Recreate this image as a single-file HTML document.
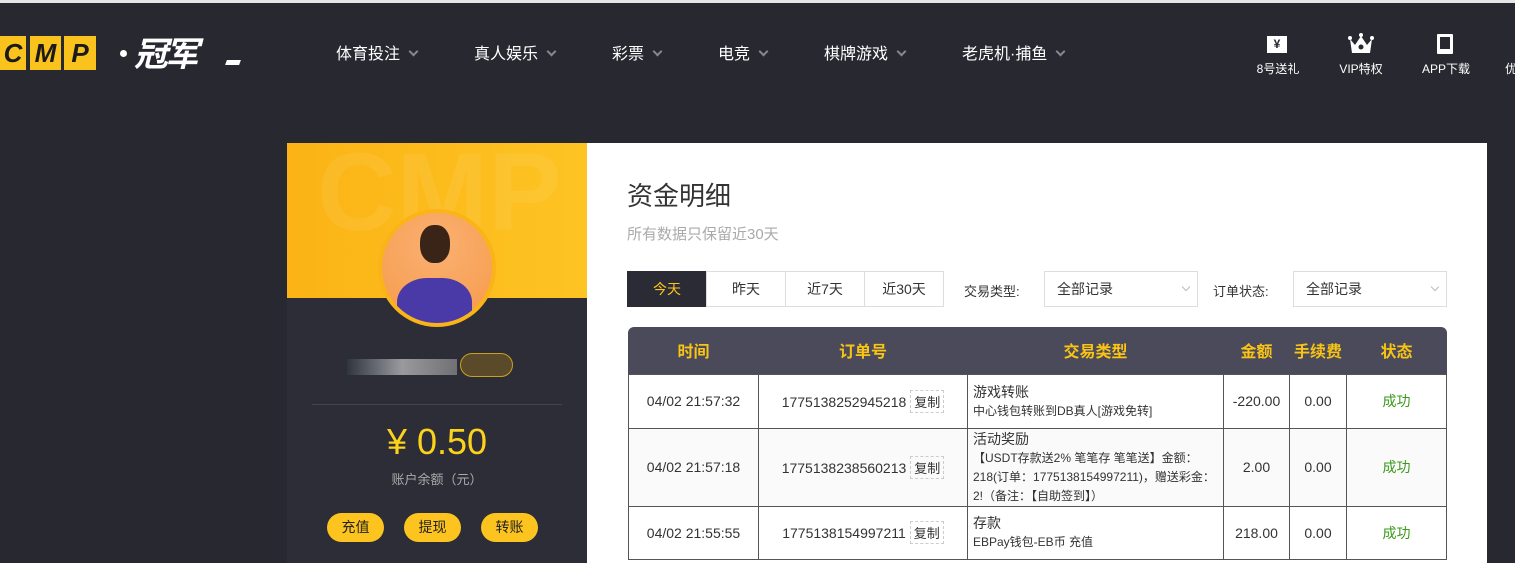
<!DOCTYPE html>
<html><head><meta charset="utf-8"><style>
*{margin:0;padding:0;box-sizing:border-box}
body{width:1515px;height:563px;overflow:hidden;background:#282830;font-family:"Liberation Sans","Noto Sans CJK SC",sans-serif;position:relative}
.topline{position:absolute;left:0;top:0;width:1515px;height:3px;background:#e6e6e6}
.abs{position:absolute}
.logo .b{position:absolute;top:36px;height:34px;background:#f9c21c;color:#1a1a1a;font:italic bold 26px "Liberation Sans",sans-serif;text-align:center;line-height:34px}
.nav{position:absolute;top:40px;color:#fff;font-size:16px;white-space:nowrap}
.nav i{display:inline-block;width:7px;height:7px;border-right:2px solid #888;border-bottom:2px solid #888;transform:rotate(45deg);margin-left:10px;position:relative;top:-4px}
.ic{position:absolute;top:60px;color:#fff;font-size:12px;text-align:center;width:70px}
.card{position:absolute;left:287px;top:143px;width:300px;height:420px;background:#2d2d37}
.cardtop{position:absolute;left:0;top:0;width:300px;height:155px;background:linear-gradient(90deg,#fbb315,#fdc423);overflow:hidden}
.panel{position:absolute;left:587px;top:143px;width:900px;height:420px;background:#fff}
.btn{position:absolute;top:513px;width:57px;height:29px;border-radius:15px;background:#fdc41f;color:#222;font-size:14px;text-align:center;line-height:29px}
table{position:absolute;left:628px;top:327px;width:819px;border-collapse:collapse;font-size:14px;color:#333}
th{color:#f9c414;height:47px;font-size:16px;font-weight:bold}
td{border:1px solid #555;text-align:center}
.l{text-align:left;padding-left:5px;font-size:14px;line-height:20px}
.l small{font-size:12px;display:block;line-height:19px}
.cp{display:inline-block;border:1px dashed #ccc;padding:1px 3px;margin-left:4px;font-size:13px}
.ok{color:#3a9a1a}
.tab{position:absolute;top:271px;height:36px;border:1px solid #ddd;text-align:center;line-height:34px;font-size:14px;color:#333}
.sel{position:absolute;top:271px;height:36px;width:154px;border:1px solid #ddd;font-size:14px;line-height:34px;padding-left:12px;color:#333}
.sel:after{content:"";position:absolute;right:8px;top:12px;width:5px;height:5px;border-right:1px solid #bbb;border-bottom:1px solid #bbb;transform:rotate(45deg)}
</style></head><body>
<div class="topline"></div>
<div class="logo"><div class="b" style="left:0;width:26px">C</div><div class="b" style="left:30px;width:31px">M</div><div class="b" style="left:64px;width:32px">P</div></div>
<div class="abs" style="left:120px;top:50px;width:7px;height:7px;border-radius:50%;background:#fff"></div>
<div class="abs" style="left:134px;top:30px;color:#fff;font:italic bold 34px 'Noto Sans CJK SC',sans-serif;letter-spacing:-3px;line-height:44px">冠军</div>
<div class="abs" style="left:226px;top:60px;width:14px;height:5px;background:#fff;transform:skewX(-20deg)"></div>
<div class="nav" style="left:336px">体育投注<i></i></div>
<div class="nav" style="left:474px">真人娱乐<i></i></div>
<div class="nav" style="left:612px">彩票<i></i></div>
<div class="nav" style="left:718px">电竞<i></i></div>
<div class="nav" style="left:824px">棋牌游戏<i></i></div>
<div class="nav" style="left:962px">老虎机·捕鱼<i></i></div>
<div class="abs" style="left:1267px;top:36px;width:20px;height:17px;background:#fff;color:#282830;font-size:12px;font-weight:bold;text-align:center;line-height:17px">¥</div>
<div class="ic" style="left:1243px">8号送礼</div>
<svg class="abs" style="left:1348px;top:32px" width="26" height="22"><path d="M2 7L7 13L13 4L19 13L24 7L22 21H4Z" fill="#fff"/><circle cx="2" cy="6" r="2" fill="#fff"/><circle cx="13" cy="3" r="2" fill="#fff"/><circle cx="24" cy="6" r="2" fill="#fff"/><circle cx="13" cy="15" r="2.5" fill="#282830"/></svg>
<div class="ic" style="left:1326px">VIP特权</div>
<div class="abs" style="left:1437px;top:34px;width:16px;height:20px;border:3px solid #fff;border-bottom-width:5px;border-radius:1px"></div>
<div class="ic" style="left:1411px">APP下载</div>
<div class="ic" style="left:1505px;width:20px;text-align:left">优</div>

<div class="card">
 <div class="cardtop"><div style="position:absolute;left:30px;top:0;font:bold 110px 'Liberation Sans',sans-serif;color:rgba(255,255,255,.07);line-height:100px">CMP</div></div>
 <div style="position:absolute;left:91px;top:66px;width:118px;height:118px;border-radius:50%;background:#fbb417"></div>
 <div style="position:absolute;left:95px;top:70px;width:110px;height:110px;border-radius:50%;background:radial-gradient(circle at 50% 30%,#fbb071,#f59a4a);overflow:hidden">
  <div style="position:absolute;left:38px;top:12px;width:30px;height:38px;border-radius:45%;background:#3a2418"></div>
  <div style="position:absolute;left:15px;top:65px;width:75px;height:60px;border-radius:40% 40% 0 0;background:#4a3aa8"></div>
 </div>
 <div style="position:absolute;left:60px;top:216px;width:110px;height:16px;background:linear-gradient(90deg,#2f3540,#9a999e,#707075)"></div>
 <div style="position:absolute;left:173px;top:210px;width:53px;height:24px;border:1px solid #c9a020;border-radius:12px;background:#5a4a2a"></div>
 <div style="position:absolute;left:25px;top:261px;width:250px;height:1px;background:#444450"></div>
 <div style="position:absolute;left:0;top:278px;width:300px;text-align:center;color:#fdd21a;font-size:36px">¥ 0.50</div>
 <div style="position:absolute;left:0;top:326px;width:300px;text-align:center;color:#aaa;font-size:13px">账户余额（元）</div>
</div>
<div class="btn" style="left:327px">充值</div>
<div class="btn" style="left:404px">提现</div>
<div class="btn" style="left:481px">转账</div>

<div class="panel"></div>
<div class="abs" style="left:627px;top:176px;font-size:26px;color:#333">资金明细</div>
<div class="abs" style="left:627px;top:223px;font-size:15px;color:#aaa">所有数据只保留近30天</div>
<div class="tab" style="left:627px;width:80px;background:#2b2b35;border-color:#2b2b35;color:#fdc41f">今天</div>
<div class="tab" style="left:706px;width:80px">昨天</div>
<div class="tab" style="left:785px;width:80px">近7天</div>
<div class="tab" style="left:864px;width:80px">近30天</div>
<div class="abs" style="left:964px;top:281px;font-size:13px;color:#333">交易类型:</div>
<div class="sel" style="left:1044px">全部记录</div>
<div class="abs" style="left:1213px;top:281px;font-size:13px;color:#333">订单状态:</div>
<div class="sel" style="left:1293px">全部记录</div>
<div class="abs" style="left:628px;top:327px;width:819px;height:47px;background:#4a4a5a;border-radius:6px 6px 0 0"></div>
<table>
<tr><th style="width:130px">时间</th><th style="width:209px">订单号</th><th style="width:256px">交易类型</th><th style="width:66px">金额</th><th style="width:57px">手续费</th><th>状态</th></tr>
<tr style="height:54px"><td>04/02 21:57:32</td><td>1775138252945218<span class="cp">复制</span></td><td class="l">游戏转账<small>中心钱包转账到DB真人[游戏免转]</small></td><td>-220.00</td><td>0.00</td><td class="ok">成功</td></tr>
<tr style="height:77px;background:#fafafa"><td>04/02 21:57:18</td><td>1775138238560213<span class="cp">复制</span></td><td class="l">活动奖励<small>【USDT存款送2% 笔笔存 笔笔送】金额：218(订单：1775138154997211)，赠送彩金：2!（备注：【自助签到】）</small></td><td>2.00</td><td>0.00</td><td class="ok">成功</td></tr>
<tr style="height:53px"><td>04/02 21:55:55</td><td>1775138154997211<span class="cp">复制</span></td><td class="l">存款<small>EBPay钱包-EB币 充值</small></td><td>218.00</td><td>0.00</td><td class="ok">成功</td></tr>
</table>
</body></html>
